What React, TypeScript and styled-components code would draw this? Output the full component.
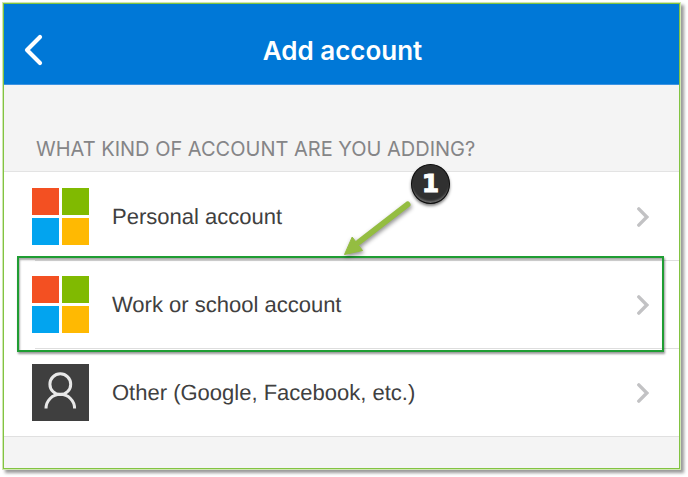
import React from "react";
import styled, { createGlobalStyle } from "styled-components";

const GlobalStyle = createGlobalStyle`
  *, *::before, *::after { box-sizing: border-box; }
  body { margin: 0; background: #fff; }
`;

const Frame = styled.main`
  margin: 3px 8px 8px 3px;
  padding-bottom: 31px;
  border: 1px solid #82c341;
  background: #f4f4f4;
  box-shadow: 0 0 0 1px #cfe8b0, 3px 3px 3px 1px rgba(0, 0, 0, 0.4);
  font-family: "Liberation Sans", Arial, sans-serif;
`;

const Header = styled.header`
  display: grid;
  grid-template-columns: 60px 1fr 60px;
  align-items: center;
  height: 81px;
  padding-top: 12px;
  background: #0078d7;
  border-bottom: 1px solid #3d93e2;
`;

const BackButton = styled.button`
  display: flex;
  padding: 0 0 0 20px;
  border: 0;
  background: none;
  cursor: pointer;
`;

const Title = styled.h1`
  margin: 0;
  padding: 2px 0 0 2px;
  color: #fff;
  font: 600 26px/32px Inter, sans-serif;
  text-align: center;
`;

const SectionTitle = styled.h2`
  margin: 0;
  padding: 52px 32px 10px;
  color: #858587;
  font: 400 20px/24px Inter, sans-serif;
`;

const AccountList = styled.ul`
  margin: 0;
  padding: 0;
  list-style: none;
  background: #fff;
  border-top: 1px solid #e3e3e3;
  border-bottom: 1px solid #e0e0e0;
`;

const AccountItem = styled.li<{ $divided: boolean }>`
  position: relative;

  &::before {
    content: "";
    display: block;
    height: 1px;
    margin-left: 31px;
    background: ${(p) => (p.$divided ? "#dedede" : "transparent")};
  }
`;

const AccountButton = styled.button`
  display: flex;
  align-items: center;
  gap: 23px;
  width: 100%;
  padding: 15px 30px 15px 28px;
  border: 0;
  background: none;
  color: #404040;
  font: 400 22px/28px "Liberation Sans", Arial, sans-serif;
  text-rendering: geometricPrecision;
  text-align: left;
  cursor: pointer;
`;

const Label = styled.span`
  flex: 1;
`;

const MicrosoftTiles = styled.span`
  display: grid;
  grid-template-columns: 27px 27px;
  grid-template-rows: 27px 27px;
  gap: 3px;
`;

const Tile = styled.span<{ $color: string }>`
  background: ${(p) => p.$color};
`;

const PersonTile = styled.span`
  display: flex;
  width: 57px;
  height: 57px;
  background: #3f3f3f;
`;

const Highlight = styled.div`
  position: absolute;
  z-index: 1;
  inset: -4px 15px -4px 13px;
  border: 2px solid #1f9d33;
  box-shadow: 1px 2px 2px rgba(0, 0, 0, 0.4), inset 1px 2px 2px rgba(0, 0, 0, 0.35);
  pointer-events: none;
`;

const Callout = styled.div`
  position: absolute;
  z-index: 2;
  top: -99px;
  left: 336px;
  width: 112px;
  height: 98px;
  pointer-events: none;
`;

const Arrow = styled.svg`
  display: block;
  overflow: visible;
  filter: drop-shadow(1px 2px 2px rgba(0, 0, 0, 0.45));
`;

const Badge = styled.span`
  position: absolute;
  top: 3px;
  right: 2px;
  display: flex;
  align-items: center;
  justify-content: center;
  width: 39px;
  height: 40px;
  border: 1px solid #0c0c0c;
  border-radius: 50%;
  background: #303030;
  box-shadow: 0 2px 3px rgba(0, 0, 0, 0.5), inset 0 -3px 2px -1px #6a6a6a;
  color: #fff;
  font: 700 25px/38px "DejaVu Sans", sans-serif;
  -webkit-text-stroke: 1px #fff;
`;

function MicrosoftIcon() {
  return (
    <MicrosoftTiles aria-hidden="true">
      <Tile $color="#f35022" />
      <Tile $color="#80ba01" />
      <Tile $color="#02a4ef" />
      <Tile $color="#ffb902" />
    </MicrosoftTiles>
  );
}

function PersonIcon() {
  return (
    <PersonTile aria-hidden="true">
      <svg width="57" height="57" viewBox="0 0 57 57" fill="none" stroke="#e8e8e8" strokeWidth="3">
        <circle cx="28.3" cy="20.2" r="10.4" />
        <path d="M14 44.6a14.3 14.3 0 0 1 28.6 0" />
      </svg>
    </PersonTile>
  );
}

function Chevron() {
  return (
    <svg width="12" height="20" viewBox="0 0 12 20" fill="none" stroke="#c2c2c4" strokeWidth="3.4" aria-hidden="true">
      <path d="M1.8 1.9 9.8 10 1.8 18.1" strokeLinecap="round" />
    </svg>
  );
}

const accounts = [
  { label: "Personal account", icon: <MicrosoftIcon /> },
  { label: "Work or school account", icon: <MicrosoftIcon />, step: 1 },
  { label: "Other (Google, Facebook, etc.)", icon: <PersonIcon /> },
];

function StepCallout({ step }: { step: number }) {
  return (
    <>
      <Highlight />
      <Callout>
        <Arrow width="112" height="98" viewBox="0 0 112 98" aria-hidden="true">
          <path d="M67.5 43.5 19 81" stroke="#94bd41" strokeWidth="6" strokeLinecap="round" />
          <path d="M4.5 93.5 12.2 76 22.5 89.5Z" fill="#94bd41" stroke="#94bd41" strokeLinejoin="round" />
        </Arrow>
        <Badge>{step}</Badge>
      </Callout>
    </>
  );
}

export default function App() {
  return (
    <>
      <GlobalStyle />
      <Frame>
        <Header>
          <BackButton type="button" aria-label="Back">
            <svg width="20" height="32" viewBox="0 0 20 32" fill="none" stroke="#fff" strokeWidth="4.2">
              <path d="M16 3 3 16 16 29" strokeLinecap="round" strokeLinejoin="round" />
            </svg>
          </BackButton>
          <Title>Add account</Title>
        </Header>
        <SectionTitle>WHAT KIND OF ACCOUNT ARE YOU ADDING?</SectionTitle>
        <AccountList>
          {accounts.map(({ label, icon, step }, index) => (
            <AccountItem key={label} $divided={index > 0}>
              <AccountButton type="button">
                {icon}
                <Label>{label}</Label>
                <Chevron />
              </AccountButton>
              {step && <StepCallout step={step} />}
            </AccountItem>
          ))}
        </AccountList>
      </Frame>
    </>
  );
}
